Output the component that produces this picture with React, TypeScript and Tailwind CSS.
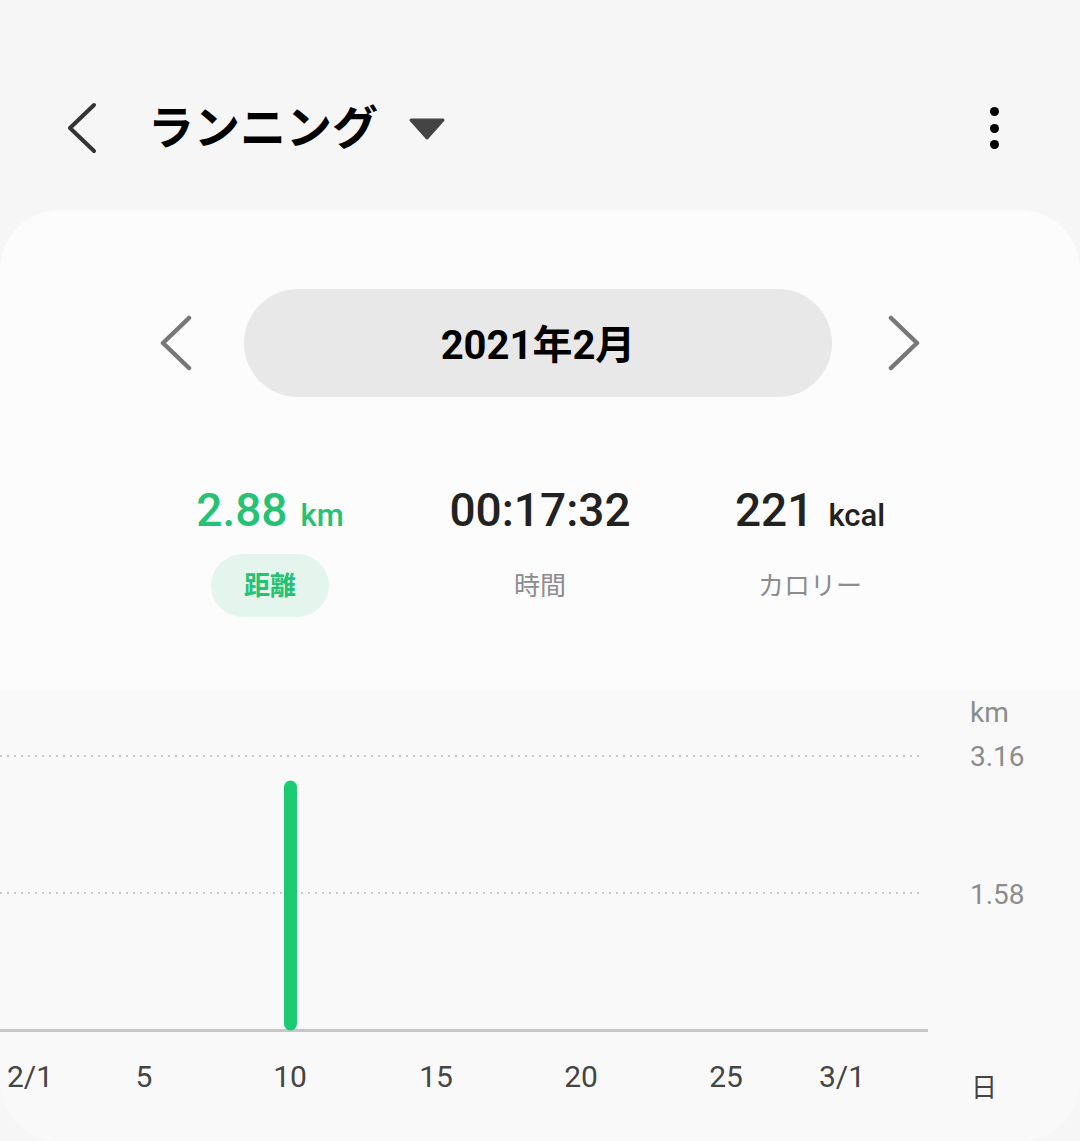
import React from "react";

const JP = '"Roboto", "Noto Sans CJK JP", sans-serif';

const xLabels: { label: string; day: number }[] = [
  { label: "2/1", day: 1 },
  { label: "5", day: 5 },
  { label: "10", day: 10 },
  { label: "15", day: 15 },
  { label: "20", day: 20 },
  { label: "25", day: 25 },
  { label: "3/1", day: 29 },
];

const dayX = (d: number) => 30 + (d - 1) * 29;

export default function App() {
  return (
    <div
      className="w-[1080px] h-[1141px] bg-[#f6f6f6] overflow-hidden flex flex-col"
      style={{ fontFamily: JP }}
    >
      {/* Header */}
      <header className="mt-[88px] h-[80px] flex items-center pl-[66px] pr-[81px]">
        <svg width="32" height="52" viewBox="0 0 32 52" className="shrink-0">
          <path d="M28 3 L4 26 L28 49" fill="none" stroke="#333" strokeWidth="4" strokeLinecap="round" strokeLinejoin="round" />
        </svg>
        <h1 className="ml-[50px] text-[46px] font-bold text-black leading-none tracking-[0px]">ランニング</h1>
        <svg width="38" height="24" viewBox="0 0 38 24" className="ml-[30px] mt-[2px] shrink-0">
          <path d="M3 3 L35 3 L19 21 Z" fill="#444" stroke="#444" strokeWidth="3" strokeLinejoin="round" />
        </svg>
        <div className="flex-1" />
        <div className="flex flex-col items-center gap-[7.5px]">
          <span className="w-[9px] h-[9px] rounded-full bg-black" />
          <span className="w-[9px] h-[9px] rounded-full bg-black" />
          <span className="w-[9px] h-[9px] rounded-full bg-black" />
        </div>
      </header>

      {/* Card */}
      <main className="mt-[42px] flex-1 bg-[#fcfcfc] rounded-[60px] overflow-hidden flex flex-col">
        {/* Month selector */}
        <div className="mt-[79px] flex items-center justify-center">
          <svg width="34" height="56" viewBox="0 0 34 56" className="shrink-0">
            <path d="M30 3 L4 28 L30 53" fill="none" stroke="#777" strokeWidth="4.5" strokeLinecap="round" strokeLinejoin="round" />
          </svg>
          <div className="ml-[51px] mr-[55px] w-[588px] h-[108px] rounded-full bg-[#e8e8e8] flex items-center justify-center">
            <span className="mt-[6px] text-[40px] font-bold text-black leading-none">2021年2月</span>
          </div>
          <svg width="34" height="56" viewBox="0 0 34 56" className="shrink-0">
            <path d="M4 3 L30 28 L4 53" fill="none" stroke="#777" strokeWidth="4.5" strokeLinecap="round" strokeLinejoin="round" />
          </svg>
        </div>

        {/* Stats */}
        <div className="mt-[90px] w-[810px] mx-auto grid grid-cols-3">
          <div className="flex flex-col items-center">
            <div className="h-[56px] flex items-baseline text-[#26c273]">
              <span className="text-[46px] font-medium leading-none">2.88</span>
              <span className="ml-[13px] text-[31px] font-medium leading-none">km</span>
            </div>
            <div className="mt-[11px] w-[118px] h-[63px] rounded-full bg-[#e3f5ec] flex items-center justify-center">
              <span className="text-[26px] font-bold text-[#26c273] leading-none">距離</span>
            </div>
          </div>
          <div className="flex flex-col items-center">
            <div className="h-[56px] flex items-baseline text-[#222]">
              <span className="text-[46px] font-medium leading-none">00:17:32</span>
            </div>
            <div className="mt-[11px] h-[63px] flex items-center justify-center">
              <span className="text-[26px] text-[#8c8c8c] leading-none">時間</span>
            </div>
          </div>
          <div className="flex flex-col items-center">
            <div className="h-[56px] flex items-baseline text-[#222]">
              <span className="text-[46px] font-medium leading-none">221</span>
              <span className="ml-[15px] text-[31px] font-medium leading-none">kcal</span>
            </div>
            <div className="mt-[11px] h-[63px] flex items-center justify-center">
              <span className="text-[26px] text-[#8c8c8c] leading-none">カロリー</span>
            </div>
          </div>
        </div>

        {/* Chart */}
        <div className="mt-[73px] flex-1 bg-[#f9f9f9] relative">
          <svg width="930" height="345" viewBox="0 0 930 345" className="absolute left-0 top-0">
            <line x1="0" y1="66" x2="922" y2="66" stroke="#c8c8c8" strokeWidth="2" strokeDasharray="2 5" />
            <line x1="0" y1="203" x2="922" y2="203" stroke="#c8c8c8" strokeWidth="2" strokeDasharray="2 5" />
            <line x1="0" y1="340.5" x2="928" y2="340.5" stroke="#c6c6c6" strokeWidth="3" />
            <line x1="290.5" y1="97" x2="290.5" y2="334" stroke="#1cca73" strokeWidth="13" strokeLinecap="round" />
          </svg>

          <span className="absolute left-[970px] top-[8px] text-[28px] text-[#8c8c8c] leading-[30px]">km</span>
          <span className="absolute left-[970px] top-[52px] text-[28px] text-[#8c8c8c] leading-[30px]">3.16</span>
          <span className="absolute left-[970px] top-[190px] text-[28px] text-[#8c8c8c] leading-[30px]">1.58</span>

          {xLabels.map((l) => (
            <span
              key={l.label}
              className="absolute top-[371px] -translate-x-1/2 text-[30px] text-[#444] leading-[32px]"
              style={{ left: l.day === 5 ? 144 : l.day === 10 ? 290 : dayX(l.day) }}
            >
              {l.label}
            </span>
          ))}
          <span className="absolute left-[971px] top-[384px] text-[26px] text-[#444] leading-[28px]">日</span>
        </div>
      </main>
    </div>
  );
}
